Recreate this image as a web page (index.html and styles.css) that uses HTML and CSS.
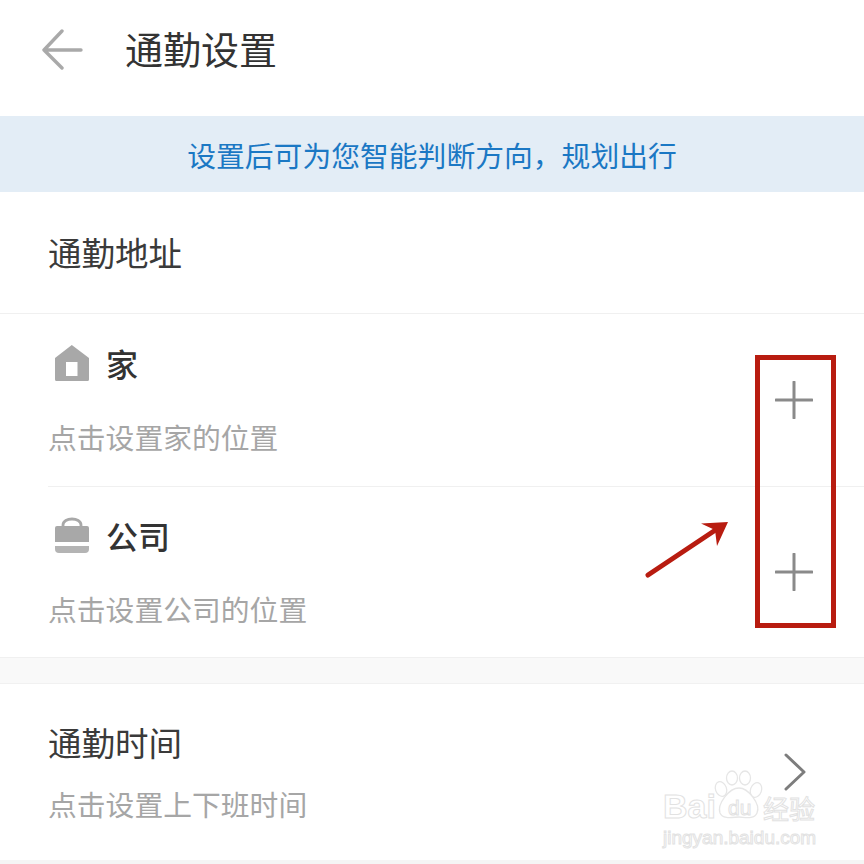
FILE: index.html
```html
<!DOCTYPE html>
<html lang="zh-CN">
<head>
    <meta charset="UTF-8">
    <meta name="viewport" content="width=device-width, initial-scale=1.0">
    <title>通勤设置</title>
    <link rel="stylesheet" href="styles.css">
</head>
<body>
    <div class="page">
        <header class="nav">
            <svg class="back-icon" width="42" height="42" viewBox="0 0 42 42">
                <path d="M21 2 L3 21 L21 39 M3 21 H40" fill="none" stroke="#a9a9a9" stroke-width="3.4" stroke-linecap="round" stroke-linejoin="round"/>
            </svg>
            <h1 class="nav-title">通勤设置</h1>
        </header>

        <div class="banner">设置后可为您智能判断方向，规划出行</div>

        <div class="section-title">通勤地址</div>

        <div class="place">
            <div class="place-text">
                <div class="place-name">
                    <svg class="place-icon" width="36" height="38" viewBox="0 0 36 38">
                        <path d="M17.8 1 L35 14 V35.500 Q35 37 33.500 37 H2.500 Q1 37 1 35.500 V14 Z M12 18 V32 H23.500 V18 Z" fill="#a8a8a8" fill-rule="evenodd"/>
                    </svg>
                    <span>家</span>
                </div>
                <div class="hint">点击设置家的位置</div>
            </div>
            <svg class="plus-icon" width="38" height="38" viewBox="0 0 38 38">
                <path d="M1 19 H37 M19 1 V37" stroke="#8a8a8a" stroke-width="3" stroke-linecap="round"/>
            </svg>
        </div>

        <div class="place place-last">
            <div class="place-text">
                <div class="place-name">
                    <svg class="place-icon" width="36" height="38" viewBox="0 0 36 38">
                        <path d="M9 12 V9 C9 1 27 1 27 9 V12" fill="none" stroke="#a8a8a8" stroke-width="2.800"/>
                        <path d="M3 10 H33 Q35 10 35 12 V26 H1 V12 Q1 10 3 10 Z" fill="#a8a8a8"/>
                        <path d="M1 30 H35 V33 Q35 37 31 37 H5 Q1 37 1 33 Z" fill="#b4b4b4"/>
                    </svg>
                    <span>公司</span>
                </div>
                <div class="hint">点击设置公司的位置</div>
            </div>
            <svg class="plus-icon" width="38" height="38" viewBox="0 0 38 38">
                <path d="M1 19 H37 M19 1 V37" stroke="#8a8a8a" stroke-width="3" stroke-linecap="round"/>
            </svg>
        </div>

        <div class="gap"></div>

        <div class="time-row">
            <div>
                <div class="time-title">通勤时间</div>
                <div class="hint">点击设置上下班时间</div>
            </div>
            <svg class="chevron" width="22" height="38" viewBox="0 0 22 38">
                <path d="M2 2 L20 19 L2 36" fill="none" stroke="#7d7d7d" stroke-width="3" stroke-linecap="round" stroke-linejoin="round"/>
            </svg>
        </div>
    </div>

    <!-- annotation drawn over the screenshot -->
    <div class="mark-box"></div>
    <svg class="mark-arrow" width="90" height="62" viewBox="0 0 90 62">
        <path d="M3 58 L72 12" stroke="#b81c10" stroke-width="5" stroke-linecap="round"/>
        <path d="M83 5 L56 6.500 L70 13 L72 29 Z" fill="#b81c10"/>
    </svg>

    <!-- watermark -->
    <div class="watermark">
        <svg class="paw" width="50" height="52" viewBox="0 0 50 52">
            <g fill="#fff" stroke="#e6e6e6" stroke-width="1.300">
                <ellipse cx="7" cy="19" rx="5.500" ry="7.500" transform="rotate(-20 7 19)"/>
                <ellipse cx="18" cy="8" rx="5.500" ry="7"/>
                <ellipse cx="31" cy="8" rx="5.500" ry="7"/>
                <ellipse cx="42" cy="20" rx="5.500" ry="7.500" transform="rotate(20 42 20)"/>
                <path d="M25 18 C34 18 47 34 43 43 C40 50 30 47 25 47 C20 47 9 50 6 43 C3 34 15 18 25 18 Z"/>
            </g>
        </svg>
        <span class="wm-du">du</span>
        <span class="wm-bai">Bai</span>
        <span class="wm-jy">经验</span>
        <span class="wm-url">jingyan.baidu.com</span>
    </div>
</body>
</html>
```

FILE: styles.css
```css
* {
    margin: 0;
    padding: 0;
    box-sizing: border-box;
}

body {
    font-family: "Noto Sans CJK SC", "Noto Sans", sans-serif;
    background: #fff;
    width: 864px;
    height: 864px;
    overflow: hidden;
    position: relative;
}

.nav {
    height: 116px;
    display: flex;
    align-items: center;
    padding: 0 0 16px 41px;
}

.back-icon {
    display: block;
}

.nav-title {
    margin: 0 0 4px 42px;
    font-size: 38px;
    font-weight: 400;
    color: #333;
    line-height: 1;
}

.banner {
    height: 76px;
    background: #e3edf6;
    color: #1b78c4;
    font-size: 28.800px;
    display: flex;
    align-items: center;
    justify-content: center;
}

.section-title {
    height: 122px;
    padding: 0 0 2px 48px;
    display: flex;
    align-items: center;
    font-size: 33.500px;
    color: #3a3a3a;
    border-bottom: 1px solid #f0f0f0;
}

.place {
    height: 173px;
    margin-left: 48px;
    padding-right: 51px;
    display: flex;
    align-items: center;
    justify-content: space-between;
    border-bottom: 1px solid #f0f0f0;
}

.place-last {
    height: 171px;
    margin-left: 0;
    padding-left: 48px;
}

.place-name {
    display: flex;
    align-items: center;
    font-size: 32px;
    font-weight: 500;
    color: #333;
    line-height: 40px;
    margin-bottom: 34px;
}

.place-icon {
    margin: 0 16px 0 6px;
}

.hint {
    font-size: 28.800px;
    color: #a6a6a6;
    line-height: 40px;
}

.gap {
    height: 26px;
    background: #f9f9f9;
    border-bottom: 1px solid #f1f1f1;
}

.time-row {
    height: 180px;
    padding: 0 58px 0 48px;
    display: flex;
    align-items: center;
    justify-content: space-between;
    border-bottom: 4px solid #f5f5f5;
}

.time-title {
    font-size: 33.500px;
    color: #3a3a3a;
    line-height: 44px;
    margin-bottom: 20px;
}

/* annotation */
.mark-box {
    position: absolute;
    left: 755px;
    top: 355px;
    width: 81px;
    height: 273px;
    border: 5px solid #b81c10;
}

.mark-arrow {
    position: absolute;
    left: 645px;
    top: 517px;
}

/* watermark */
.watermark {
    position: absolute;
    left: 662px;
    top: 770px;
    width: 160px;
    height: 84px;
}

.watermark span {
    position: absolute;
    color: #fff;
    -webkit-text-stroke: 1px #e2e2e2;
    line-height: 1;
    white-space: nowrap;
    font-family: "Liberation Sans", sans-serif;
}

.paw {
    position: absolute;
    left: 52px;
    top: 0;
}

.wm-bai {
    left: 1px;
    top: 19px;
    font-size: 34px;
    font-weight: 700;
}

.wm-du {
    left: 66px;
    top: 27px;
    font-size: 21px;
}

.wm-jy {
    left: 101px;
    top: 25px;
    font-size: 26px;
    font-family: "Noto Sans CJK SC", sans-serif !important;
}

.wm-url {
    left: 1px;
    top: 58px;
    font-size: 19px;
}
```
